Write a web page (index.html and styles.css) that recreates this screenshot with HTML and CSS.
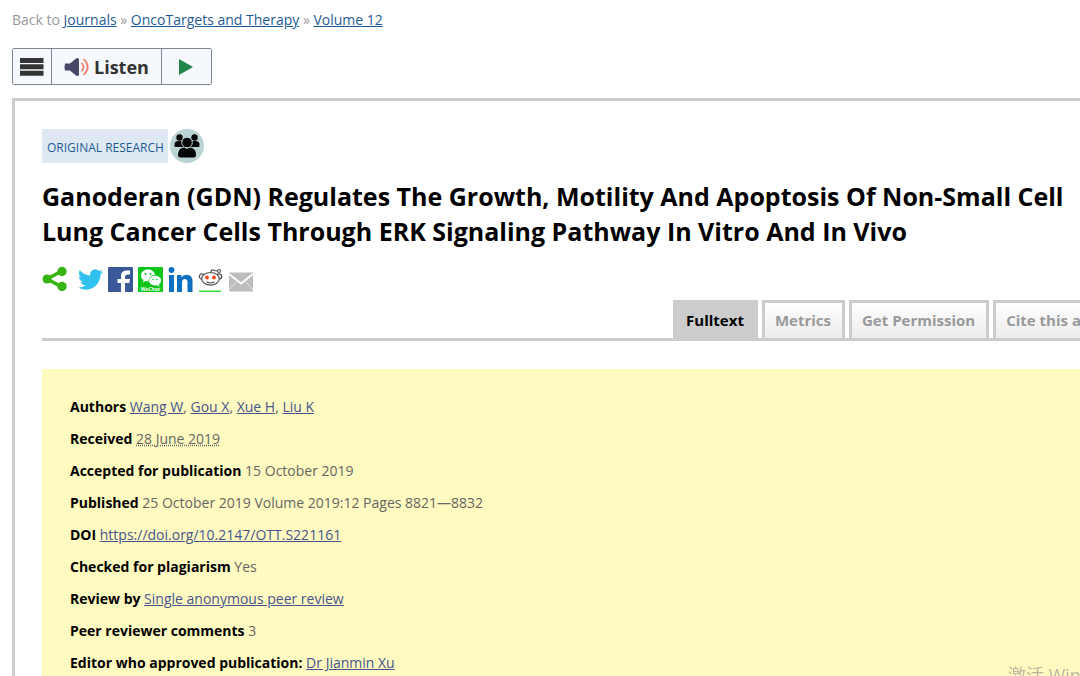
FILE: index.html
```html
<!DOCTYPE html>
<html lang="en">
<head>
<meta charset="utf-8">
<title>Ganoderan (GDN) Regulates The Growth, Motility And Apoptosis</title>
<link rel="stylesheet" href="styles.css">
</head>
<body>
<div class="page">
  <nav class="crumbs" aria-label="Breadcrumb">Back to <a href="#">Journals</a> » <a href="#">OncoTargets and Therapy</a> » <a href="#">Volume 12</a></nav>
  <div class="reader">
    <button class="reader-menu" type="button" aria-label="Reader menu">
      <svg width="24" height="20" viewBox="0 0 24 20"><path fill="#333" d="M0 1h23.500v5H0zM0 7.300h23.500v5H0zM0 13.700h23.500v5H0z"/></svg>
    </button>
    <button class="reader-listen" type="button">
      <svg width="26" height="20" viewBox="0 0 26 20"><path fill="#484767" d="M1 6.500Q0 10 1 13.500H6L12 18.500Q15 20 15 17V3Q15 0 12 1.500L6 6.500z"/><path fill="none" stroke="#f48166" stroke-width="1.700" stroke-linecap="round" d="M18 6.500q3 3.500 0 7M20 2.500q7.500 7.500 0 15"/></svg>
      <span>Listen</span>
    </button>
    <button class="reader-play" type="button" aria-label="Play">
      <svg width="16" height="18" viewBox="0 0 16 18"><path fill="#23874b" d="M1 1l14 8-14 8z"/></svg>
    </button>
  </div>
  <main class="article">
    <div class="kind">
      <span class="kind-label">ORIGINAL RESEARCH</span>
      <svg width="34" height="34" viewBox="0 0 34 34"><circle cx="17" cy="17" r="17" fill="#bad3d3"/><g fill="#050505"><circle cx="9.500" cy="8.500" r="3.200"/><circle cx="24.500" cy="8.500" r="3.200"/><path d="M4.500 17q-.5-5 4-5h3l2 6H6q-1.500 0-1.500-1zM29.500 17q.5-5-4-5h-3l-2 6H28q1.500 0 1.500-1z"/><circle cx="17" cy="13.500" r="5.300" stroke="#bad3d3"/><path d="M8 26q0-7 6-7.500l3 1.500 3-1.500q6 .5 6 7.500 0 2.500-2.500 2.500h-13Q8 28.500 8 26z"/></g></svg>
    </div>
    <h1>Ganoderan (GDN) Regulates The Growth, Motility And Apoptosis Of Non-Small Cell Lung Cancer Cells Through ERK Signaling Pathway In Vitro And In Vivo</h1>
    <div class="share">
      <a class="share-main" href="#" aria-label="Share"><svg width="26" height="26" viewBox="0 0 26 26"><path fill="none" stroke="#37b314" stroke-width="3.600" d="M20 5L5 13l15 8"/><g fill="#37b314"><circle cx="20" cy="5.500" r="4.700"/><circle cx="5" cy="13" r="4.500"/><circle cx="20" cy="20.500" r="4.700"/></g></svg></a>
      <a href="#" aria-label="Twitter"><svg width="25" height="25" viewBox="0 0 24 24"><path fill="#2fc2ef" d="M23.950 4.570a10 10 0 0 1-2.820.77 4.960 4.960 0 0 0 2.160-2.720c-.95.550-2 .95-3.130 1.180a4.920 4.920 0 0 0-8.380 4.480C7.690 8.100 4.070 6.130 1.640 3.160a4.820 4.820 0 0 0-.67 2.480c0 1.710.87 3.210 2.190 4.100a4.900 4.900 0 0 1-2.230-.62v.06a4.920 4.920 0 0 0 3.950 4.830 5 5 0 0 1-2.210.08 4.940 4.940 0 0 0 4.600 3.420A9.870 9.870 0 0 1 0 19.540a14 14 0 0 0 7.550 2.210c9.050 0 14-7.500 14-13.980 0-.21 0-.42-.02-.63a9.940 9.940 0 0 0 2.420-2.570z"/></svg></a>
      <a href="#" aria-label="Facebook"><svg width="25" height="25" viewBox="0 0 25 25"><rect width="25" height="25" rx="1" fill="#3b5998"/><path fill="#fff" d="M13 25v-9h-3.500v-4H13V9q0-5 5-5.500h4v4h-2.500Q17 7.500 17 10v2h5l-.7 4H17v9z"/></svg></a>
      <a href="#" aria-label="WeChat"><svg width="25" height="25" viewBox="0 0 25 25"><rect width="25" height="25" rx="1" fill="#0cc51b"/><path fill="#fff" d="M10 2.500c-4 0-7 2.500-7 6 0 2 1 3.500 2.500 4.500L5 15.500 7.500 14l3 .4C10.500 10 13.500 8 17 8c-.5-3.500-3.500-5.500-7-5.500z"/><path fill="#fff" d="M17 8.700c-3.500 0-6 2.100-6 4.900s2.500 4.900 6 4.900l2-.3 2.500 1.300-.7-2.200c1.500-1 2.400-2.200 2.400-3.700 0-2.800-2.700-4.900-6.200-4.900z"/><g fill="#0cc51b"><circle cx="7.500" cy="7" r="1"/><circle cx="12.500" cy="7" r="1"/><circle cx="15" cy="12.500" r=".8"/><circle cx="19" cy="12.500" r=".8"/></g><text x="12.500" y="23.800" text-anchor="middle" class="wechat-name">WeChat</text></svg></a>
      <a href="#" aria-label="LinkedIn"><svg width="25" height="25" viewBox="0 0 25 25"><g fill="#0c6fc0"><circle cx="3.500" cy="3" r="2.900"/><path d="M1 8h5v17H1zM9 8h4.500v2.200q1.500-2.500 5-2.500 6 0 6 6.800V25h-5v-9.500q0-3.600-2.700-3.600T14 15.500V25H9z"/></g></svg></a>
      <a href="#" aria-label="Reddit"><svg width="25" height="25" viewBox="0 0 25 25"><g fill="#fff" stroke="#555" stroke-width="1.200"><circle cx="4" cy="9.500" r="2.700"/><circle cx="21" cy="9.500" r="2.700"/><path fill="none" d="M12.500 6l1.200-3 5.800 1"/><circle cx="21" cy="4" r="1.500"/><ellipse cx="12.500" cy="11.800" rx="8.800" ry="6.300"/><path fill="none" d="M8.500 14.800q4 2.400 8 0"/></g><g fill="#f9461c"><circle cx="9" cy="10.500" r="1.900"/><circle cx="16" cy="10.500" r="1.900"/></g><path fill="#36dc36" d="M1 23.500h22V25H1z"/></svg></a>
      <a href="#" aria-label="E-mail"><svg width="26" height="25" viewBox="0 0 26 25"><rect x="1" y="5.500" width="24" height="19" fill="#bdbdbd"/><path fill="none" stroke="#fff" stroke-width="1.800" d="M1 7l12 9.500L25 7"/><path fill="none" stroke="#e4e4e4" d="M1 23l7-8M25 23l-7-8"/></svg></a>
    </div>
    <nav class="tabs">
      <a class="tab tab-on" href="#">Fulltext</a>
      <a class="tab" href="#">Metrics</a>
      <a class="tab" href="#">Get Permission</a>
      <a class="tab" href="#">Cite this article</a>
    </nav>
    <section class="facts">
      <p><b>Authors</b> <a href="#">Wang W</a>, <a href="#">Gou X</a>, <a href="#">Xue H</a>, <a href="#">Liu K</a></p>
      <p><b>Received</b> <abbr title="Date received">28 June 2019</abbr></p>
      <p><b>Accepted for publication</b> 15 October 2019</p>
      <p><b>Published</b> 25 October 2019 Volume 2019:12 Pages 8821—8832</p>
      <p><b>DOI</b> <a href="#">https://doi.org/10.2147/OTT.S221161</a></p>
      <p><b>Checked for plagiarism</b> Yes</p>
      <p><b>Review by</b> <a href="#">Single anonymous peer review</a></p>
      <p><b>Peer reviewer comments</b> 3</p>
      <p><b>Editor who approved publication:</b> <a href="#">Dr Jianmin Xu</a></p>
    </section>
  </main>
</div>
<div class="watermark">激活 Windows</div>
</body>
</html>
```
FILE: styles.css
```css
* { box-sizing: border-box; }
body {
  margin: 0;
  height: 100vh;
  overflow: hidden;
  background: #fff;
  color: #666;
  font: 14px/20px "Open Sans", "Noto Sans", sans-serif;
}
svg { display: block; }
.page {
  width: calc(100% + 82px);
  padding: 10px 0 0 12px;
}
.crumbs { color: #999; }
.crumbs a { color: #1f5a94; }

.reader {
  display: flex;
  width: max-content;
  height: 37px;
  margin-top: 18px;
  border: 1px solid #7e8790;
  border-radius: 2px;
}
.reader button {
  display: flex;
  align-items: center;
  gap: 4px;
  margin: 0;
  padding: 0 12px;
  border: 0;
  border-right: 1px solid #7e8790;
  background: #f5f9fd;
  color: #333;
  font: bold 18px/24px "Open Sans", "Noto Sans", sans-serif;
}
.reader .reader-menu { padding: 0 7px; }
.reader .reader-play { padding: 0 17px 0 16px; border-right: 0; }

.article {
  margin-top: 13px;
  padding: 28px 0 0 27px;
  border: 3px solid #ccc;
  border-right: 0;
  border-bottom: 0;
}
.kind { display: flex; align-items: center; gap: 2px; }
.kind-label {
  padding: 9px 4px 5px 5px;
  background: #dfe9f3;
  color: #1f5a94;
  font-size: 12px;
}
h1 {
  margin: 16px 0 0;
  padding-right: 56px;
  color: #000;
  font-size: 25px;
  line-height: 35px;
}
.share {
  display: flex;
  align-items: center;
  gap: 5px;
  margin-top: 17px;
}
.share-main { margin-right: 5px; }
.wechat-name { fill: #fff; font: bold 5px "Open Sans", sans-serif; }

.tabs {
  display: flex;
  justify-content: flex-end;
  gap: 4px;
  margin-top: 8px;
  padding-right: 28px;
  border-bottom: 3px solid #ccc;
}
.tab {
  padding: 7px 11px 8px 10px;
  border: 3px solid #ccc;
  border-bottom: 0;
  background: linear-gradient(#fff, #ececec);
  color: #999;
  font-size: 15px;
  font-weight: bold;
  text-decoration: none;
}
.tab-on { background: #ccc; color: #000; }

.facts {
  margin-top: 28px;
  padding: 28px;
  background: #fffabf;
}
.facts p { margin: 0 0 12px; }
.facts b { color: #000; }
.facts a { color: #46548f; }
.facts abbr { text-decoration: underline dotted; }

.watermark {
  position: fixed;
  left: calc(100% - 72px);
  bottom: -12px;
  color: #b9b7a0;
  font: 18px/26px "Open Sans", "Noto Sans CJK SC", sans-serif;
  white-space: nowrap;
}
```
